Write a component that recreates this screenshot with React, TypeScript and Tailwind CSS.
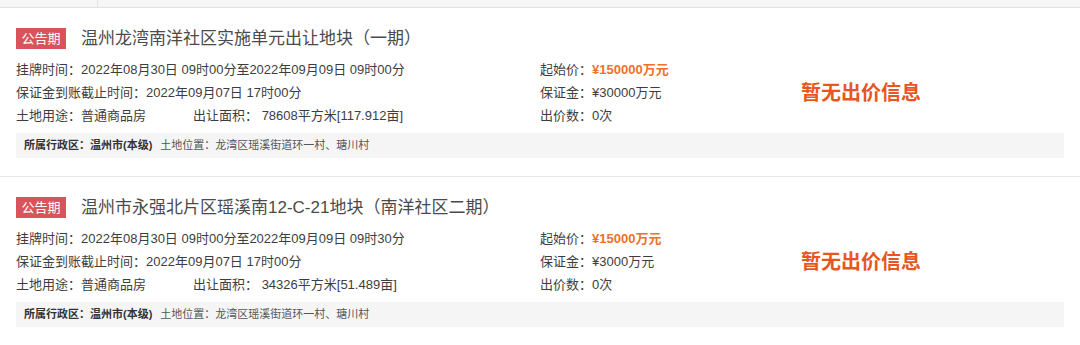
import React from "react";

type Lot = {
    title: string;
    listing: string;
    deposit: string;
    usage: string;
    area: string;
    startPrice: string;
    depositAmount: string;
    bids: string;
    district: string;
    location: string;
};

const lots: Lot[] = [
    {
        title: "温州龙湾南洋社区实施单元出让地块（一期）",
        listing: "2022年08月30日 09时00分至2022年09月09日 09时00分",
        deposit: "2022年09月07日 17时00分",
        usage: "普通商品房",
        area: "78608平方米[117.912亩]",
        startPrice: "¥150000万元",
        depositAmount: "¥30000万元",
        bids: "0次",
        district: "温州市(本级)",
        location: "龙湾区瑶溪街道环一村、瑭川村",
    },
    {
        title: "温州市永强北片区瑶溪南12-C-21地块（南洋社区二期）",
        listing: "2022年08月30日 09时00分至2022年09月09日 09时30分",
        deposit: "2022年09月07日 17时00分",
        usage: "普通商品房",
        area: "34326平方米[51.489亩]",
        startPrice: "¥15000万元",
        depositAmount: "¥3000万元",
        bids: "0次",
        district: "温州市(本级)",
        location: "龙湾区瑶溪街道环一村、瑭川村",
    },
];

function LotEntry({ lot }: { lot: Lot }) {
    return (
        <div className="px-4 pt-[20px] pb-[18px] border-b border-[#e6e6e6]">
            <div className="flex items-center h-[21px]">
                <span className="h-[21px] w-[50px] flex items-center justify-center bg-[#d9545a] text-white text-[13px]">
                    公告期
                </span>
                <span className="ml-[15px] text-[17px] text-[#4a4a4a] whitespace-nowrap">{lot.title}</span>
            </div>

            <div className="flex mt-[9px] text-[13px] text-[#3d3d3d]">
                <div className="w-[524px] flex flex-col">
                    <div className="h-[23px] flex items-center whitespace-nowrap">挂牌时间：{lot.listing}</div>
                    <div className="h-[23px] flex items-center whitespace-nowrap">保证金到账截止时间：{lot.deposit}</div>
                    <div className="h-[23px] flex items-center whitespace-nowrap">
                        <span className="w-[177px]">土地用途：{lot.usage}</span>
                        <span>出让面积：&nbsp;{lot.area}</span>
                    </div>
                </div>
                <div className="w-[261px] flex flex-col">
                    <div className="h-[23px] flex items-center whitespace-nowrap">
                        起始价：<span className="font-bold text-[#f0702a]">{lot.startPrice}</span>
                    </div>
                    <div className="h-[23px] flex items-center whitespace-nowrap">保证金：{lot.depositAmount}</div>
                    <div className="h-[23px] flex items-center whitespace-nowrap">出价数：{lot.bids}</div>
                </div>
                <div className="flex items-center">
                    <span className="text-[20px] font-bold text-[#e8561f]">暂无出价信息</span>
                </div>
            </div>

            <div className="mt-[6px] h-[25px] bg-[#f5f5f5] flex items-center px-[8px] text-[11px] whitespace-nowrap">
                <span className="font-bold text-[#333]">所属行政区：{lot.district}</span>
                <span className="ml-[8px] text-[#555]">土地位置：{lot.location}</span>
            </div>
        </div>
    );
}

export default function App() {
    return (
        <div className="w-[1080px] h-[345px] bg-white overflow-hidden font-['Liberation_Sans','Noto_Sans_CJK_SC',sans-serif]">
            <div className="h-[8px] bg-[#f6f6f6] border-b border-[#e2e2e2] flex">
                <div className="w-[98px] border-r border-[#e2e2e2]" />
            </div>
            {lots.map(lot => <LotEntry key={lot.title} lot={lot} />)}
        </div>
    );
}
